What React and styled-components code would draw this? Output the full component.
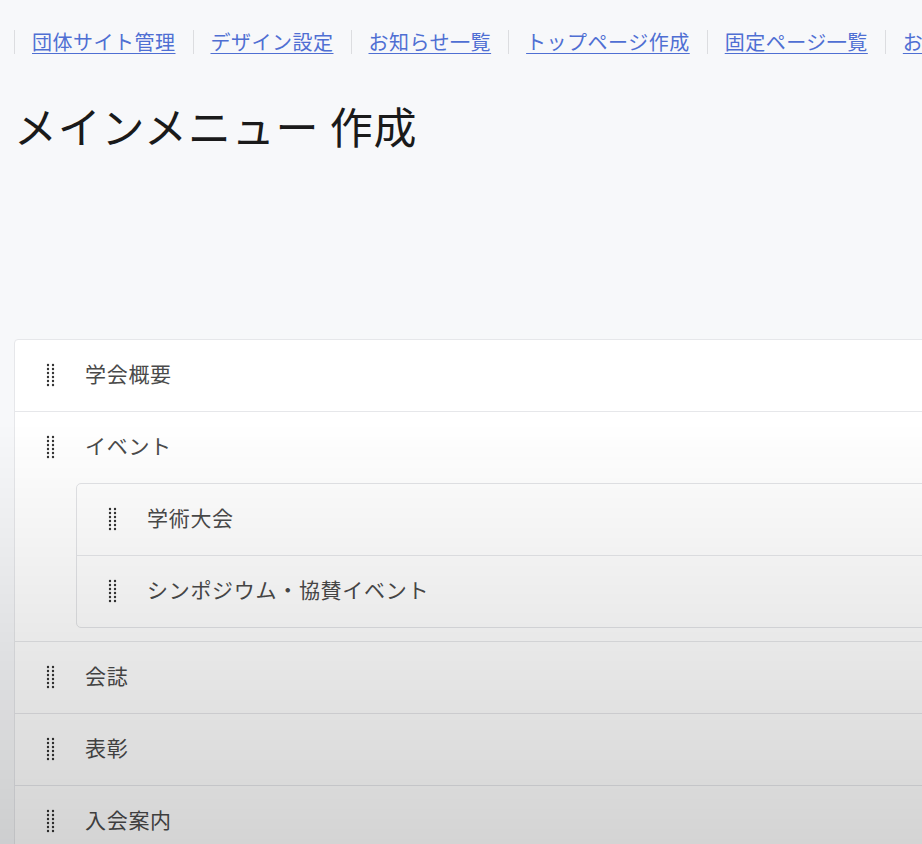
import React from "react";
import styled, { createGlobalStyle } from "styled-components";

const GlobalStyle = createGlobalStyle`
  html, body {
    margin: 0;
    padding: 0;
    background: #f7f8fa;
    overflow: hidden;
  }
  body {
    font-family: "Noto Sans CJK JP", "Noto Sans", sans-serif;
    color: #222;
  }
`;

const Page = styled.div`
  width: 922px;
  height: 844px;
  overflow: hidden;
  padding-left: 14px;
  box-sizing: border-box;
`;

const Nav = styled.nav`
  display: flex;
  margin-top: 30px;
  white-space: nowrap;
`;

const NavItem = styled.a`
  display: block;
  border-left: 1px solid #dcdde0;
  padding: 0 17px;
  font-size: 20px;
  line-height: 24px;
  letter-spacing: 0.5px;
  color: #4f6fd3;
  text-decoration: underline;
  text-underline-offset: 3px;
  text-decoration-thickness: 1px;
  flex-shrink: 0;
`;

const Title = styled.h1`
  margin: 45px 0 0 0;
  font-size: 43px;
  line-height: 52px;
  font-weight: 400;
  color: #1a1a1a;
  letter-spacing: 0.8px;
  white-space: nowrap;
`;

const List = styled.div`
  margin-top: 188px;
  width: 1200px;
  background: #fff;
  border: 1px solid #e6e7ea;
  border-radius: 4px;
`;

const Item = styled.div`
  & + & {
    border-top: 1px solid #e6e7ea;
  }
`;

const Row = styled.div`
  display: flex;
  align-items: center;
  height: 71px;
  padding-left: 31px;
`;

const Label = styled.span`
  margin-left: 30px;
  padding-bottom: 5px;
  line-height: 1;
  font-size: 21px;
  letter-spacing: 0.7px;
  color: #4a4a4a;
  white-space: nowrap;
`;

const Children = styled.div`
  margin: 0 0 13px 61px;
  background: #fff;
  border: 1px solid #e3e4e7;
  border-radius: 5px;
`;

const Vignette = styled.div`
  position: fixed;
  inset: 0;
  pointer-events: none;
  background: linear-gradient(
    to bottom,
    rgba(0, 0, 0, 0) 0%,
    rgba(0, 0, 0, 0) 50%,
    rgba(0, 0, 0, 0.04) 62%,
    rgba(0, 0, 0, 0.1) 80%,
    rgba(0, 0, 0, 0.17) 100%
  );
`;

const HandleSvg = styled.svg`
  flex-shrink: 0;
  margin-bottom: 2px;
`;

const Handle = () => (
  <HandleSvg width="9" height="24" viewBox="0 0 9 24" aria-hidden="true">
    {[0, 1, 2, 3, 4, 5].map((r) =>
      [2, 7].map((x) => (
        <circle key={`${r}-${x}`} cx={x} cy={2 + r * 4} r="1.2" fill="#333" />
      ))
    )}
  </HandleSvg>
);

const navLinks = [
  "団体サイト管理",
  "デザイン設定",
  "お知らせ一覧",
  "トップページ作成",
  "固定ページ一覧",
  "お問い合わせ",
];

const menu = [
  { label: "学会概要" },
  {
    label: "イベント",
    children: ["学術大会", "シンポジウム・協賛イベント"],
  },
  { label: "会誌" },
  { label: "表彰" },
  { label: "入会案内" },
];

export default function App() {
  return (
    <>
      <GlobalStyle />
      <Page>
        <Nav>
          {navLinks.map((l) => (
            <NavItem key={l} href="#">
              {l}
            </NavItem>
          ))}
        </Nav>
        <Title>メインメニュー 作成</Title>
        <List>
          {menu.map((m) => (
            <Item key={m.label}>
              <Row>
                <Handle />
                <Label>{m.label}</Label>
              </Row>
              {m.children && (
                <Children>
                  {m.children.map((c) => (
                    <Item key={c}>
                      <Row>
                        <Handle />
                        <Label>{c}</Label>
                      </Row>
                    </Item>
                  ))}
                </Children>
              )}
            </Item>
          ))}
        </List>
      </Page>
      <Vignette />
    </>
  );
}
